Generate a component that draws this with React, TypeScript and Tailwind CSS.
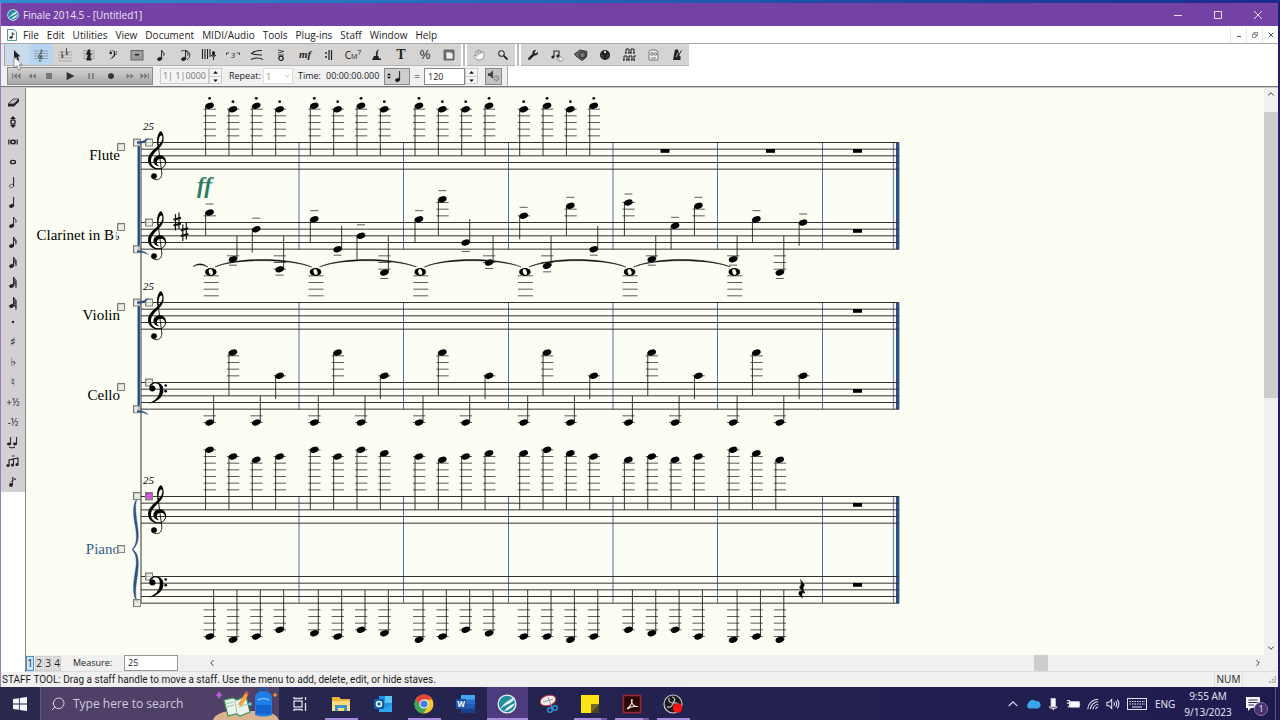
import React from 'react';
import { ChevronDown, ChevronLeft, ChevronRight, ChevronUp, Hand, Search, X } from 'lucide-react';
import { FaWrench } from 'react-icons/fa';

type Tool = { label: string; icon: React.ReactNode; active?: string };

const UI_FONT = "font-['Open_Sans','Noto_Sans',sans-serif]";

/* ---------- Music glyphs ---------- */

const TREBLE =
  'M43 3C50 9 53 24 49 36C45 50 33 58 24 68C15 78 12 86 13 95C14 107 25 115 36 115C48 115 55 107 55 98C55 90 49 86 43 86C35 86 30 91 30 97C30 102 33 106 38 109C28 108 20 102 20 93C20 83 29 76 40 76C51 76 58 85 58 96C58 109 48 118 34 118C18 118 4 107 4 90C4 76 14 65 26 55L33 49C29 30 31 10 43 3ZM46 17C42 14 34 20 36 45C42 38 50 28 46 17Z';
const BASS =
  'M8 16C8 4 18 -1 28 -1C44 0 52 12 50 28C47 46 28 61 6 63C24 55 37 44 39 26C41 10 36 2 27 2C20 2 14 6 12 12Z';

const TrebleShape = () => (
  <g>
    <path d={TREBLE} fillRule="evenodd" />
    <path d="M34 42L45 126C47 143 38 149 30 149C22 149 16 145 14 140" fill="none" stroke="currentColor" strokeWidth="2.5" />
    <circle cx="22" cy="138" r="8.5" />
  </g>
);

const BassShape = () => (
  <g>
    <path d={BASS} />
    <circle cx="17" cy="18" r="9" />
    <circle cx="57" cy="9" r="4" />
    <circle cx="57" cy="26" r="4" />
  </g>
);

const Icon = ({ children }: { children: React.ReactNode }) => (
  <svg viewBox="0 0 16 16" className="h-4 w-4" fill="currentColor" aria-hidden="true">
    {children}
  </svg>
);

const Lines = ({ x1 = 1, x2 = 15 }) => (
  <path d={`M${x1} 4H${x2}M${x1} 6.5H${x2}M${x1} 9H${x2}M${x1} 11.5H${x2}`} stroke="#8a8a8a" strokeWidth=".7" />
);

/* flags hang from the top of the stem */
const Note = ({ flags = 0, half = false, arc = false }) => (
  <Icon>
    <ellipse
      cx="6.6" cy="12" rx="2.3" ry="1.6" transform="rotate(-20 6.6 12)"
      fill={half ? 'none' : 'currentColor'} stroke="currentColor" strokeWidth=".6"
    />
    <path d="M8.6 12V3" stroke="currentColor" strokeWidth="1" />
    {Array.from({ length: flags }, (_, i) => (
      <path key={i} d={`M8.6 ${3 + i * 1.8}q.5 1.8 2 2.6q1 1.2.2 3`} fill="none" stroke="currentColor" strokeWidth="1" />
    ))}
    {arc && <path d="M4 4Q11 2 13 7Q13 11 10 13" fill="none" stroke="currentColor" strokeWidth=".8" />}
  </Icon>
);

/* ---------- Tool bars ---------- */

const mainTools: Tool[] = [
  { label: 'Selection Tool', active: 'bg-[#c9dbea]', icon: <Icon><path d="M5 3V12L7.2 10L8.6 13.5L10.2 12.8L8.8 9.4H11.5Z" /></Icon> },
  { label: 'Staff Tool', active: 'bg-[#b5d5f3]', icon: <Icon><Lines /><g transform="translate(5 2) scale(.085)"><TrebleShape /></g></Icon> },
  { label: 'Key Signature Tool', icon: <Icon><path d="M1 5H15M1 8H15M1 11H15M1 14H15" stroke="#999" strokeWidth=".7" /><path d="M5 4V11Q7.500 8 5 8M9.500 1V8Q12 5 9.500 5" fill="none" stroke="#444" strokeWidth=".9" /></Icon> },
  { label: 'Time Signature Tool', icon: <Icon><Lines x1={2} x2={14} /><path d="M7 2.5H9.3V6.5H10.5V8H5.5V6.5ZM7 8H9.5V11.5H10.5V13.5H5.5V12Z" /></Icon> },
  { label: 'Clef Tool', icon: <Icon><g transform="translate(3.4 3.4) scale(.14)"><BassShape /></g></Icon> },
  { label: 'Measure Tool', icon: <Icon><rect x="2" y="3.5" width="12" height="9.5" fill="#9d9d9d" stroke="#666" /><path d="M6 7H10V8.5H6Z" /></Icon> },
  { label: 'Simple Entry Tool', icon: <Note flags={1} /> },
  { label: 'Speedy Entry Tool', icon: <Note flags={1} arc /> },
  { label: 'HyperScribe Tool', icon: <Icon><path d="M1.5 2V12M4 2V12M6.5 2V12M9 2V10" stroke="#222" strokeWidth="1.1" /><rect x="11" y="4" width="3" height="5" rx="1.5" /><path d="M10 8Q12.5 12 15 8M12.5 10V13" fill="none" stroke="#222" /></Icon> },
  { label: 'Tuplet Tool', icon: <Icon><path d="M1.500 8V6H4M12 6H14.500V8" fill="none" stroke="#333" strokeWidth=".9" /><text x="8" y="11" fontSize="8" fontStyle="italic" textAnchor="middle">3</text></Icon> },
  { label: 'Smart Shape Tool', icon: <Icon><path d="M13 3.500Q5 3.500 2.500 6.500Q6 8 13 8M2 12.500Q8 9.500 14 12.500" fill="none" stroke="#222" strokeWidth="1.1" /></Icon> },
  { label: 'Articulation Tool', icon: <Icon><path d="M5 3L11 4.5L5 6M5 8H11" fill="none" stroke="#333" strokeWidth=".9" /><circle cx="8" cy="11.3" r="2.2" fill="none" stroke="#222" strokeWidth="1.2" /></Icon> },
  { label: 'Expression Tool', icon: <span className="font-['Liberation_Serif',serif] text-[11px] font-bold italic">mf</span> },
  { label: 'Repeat Tool', icon: <Icon><circle cx="5" cy="6" r="1" /><circle cx="5" cy="10" r="1" /><path d="M8 3V13M10.500 3V13" stroke="#222" strokeWidth="1.2" /></Icon> },
  { label: 'Chord Tool', icon: <span className="font-['Open_Sans',sans-serif] text-[10px]">C<small className="text-[7px]">M</small><sup className="text-[7px]">7</sup></span> },
  { label: 'Lyrics Tool', icon: <Icon><path d="M10 2Q6 4 7 9H5Q4 11 3 13H12V11.5H10L9.5 9H8.5Q8 5 10 2Z" /></Icon> },
  { label: 'Text Tool', icon: <span className="font-['Liberation_Serif',serif] text-sm font-bold">T</span> },
  { label: 'Resize Tool', icon: <span className="font-['Liberation_Sans',sans-serif] text-xs">%</span> },
  { label: 'Page Layout Tool', icon: <Icon><path d="M3 3H13V13H3Z" fill="#777" stroke="#555" strokeWidth=".8" /><path d="M5 5H10L12 7V12H5Z" fill="#eee" stroke="#555" strokeWidth=".6" /></Icon> },
];

const navTools: Tool[] = [
  { label: 'Hand Grabber Tool', icon: <Hand className="h-3 w-3 fill-white text-gray-500" strokeWidth={1.5} /> },
  { label: 'Zoom Tool', icon: <Icon><circle cx="6.5" cy="6.5" r="2.800" fill="#ddd" stroke="#333" strokeWidth="1.1" /><path d="M8.800 8.800L12.500 12.500" stroke="#222" strokeWidth="1.800" /></Icon> },
];

const advancedTools: Tool[] = [
  { label: 'Special Tools', icon: <FaWrench className="h-2.5 w-2.5" /> },
  { label: 'Note Mover Tool', icon: <Icon><path d="M5 10V4H10V9" fill="none" stroke="#333" strokeWidth="1.2" /><circle cx="3.8" cy="10" r="1.5" /><circle cx="8.8" cy="9" r="1.5" /><path d="M8 11H11V9L14.500 12L11 15V13H8Z" fill="#f2f2f2" stroke="#888" strokeWidth=".7" /></Icon> },
  { label: 'Graphics Tool', icon: <Icon><path d="M1.500 7L7 3L14 4.500L13.500 10L9 13.500L3 9Z" fill="#666" stroke="#333" /><circle cx="9.500" cy="8" r="3" fill="#777" stroke="#222" /></Icon> },
  { label: 'MIDI Tool', icon: <Icon><circle cx="8" cy="8" r="5" /><circle cx="8" cy="5" r="1.2" fill="#d6d4d2" /><path d="M4.4 8.6H6M10 8.6H11.6M5.5 11L6.6 10M10.5 11L9.4 10" stroke="#999" strokeWidth=".6" /></Icon> },
  { label: 'Ossia Tool', icon: <Icon><path d="M5 6V2H8V6M10 6V2H13V6M3 13V9H6V13M8 13V9H11V13M13 13V9H15" fill="none" stroke="#222" strokeWidth="1" /><path d="M4 6H5.500M7 6H8.500M9 6H10.500M12 6H13.500M2 13H3.500M5 13H6.500M7 13H8.500M10 13H11.500M12.500 13H14" stroke="#222" strokeWidth="1.6" /></Icon> },
  { label: 'Mirror Tool', icon: <Icon><path d="M4 13V5Q4 3 6 3H10Q13 3 13 6V13Z" fill="#eee" stroke="#777" /><circle cx="7" cy="7" r="1.3" fill="none" stroke="#777" /><circle cx="10.5" cy="7" r="1.3" fill="none" stroke="#777" /><path d="M6 11H11" stroke="#777" /></Icon> },
  { label: 'Tempo Tool', icon: <Icon><path d="M6 2.5H9L10.500 9H11.500V13H4Z" /><path d="M8 11L12.500 3.500" stroke="#222" /><path d="M7 10L9 6" stroke="#ddd" strokeWidth=".8" /></Icon> },
];

const entryTools: Tool[] = [
  { label: 'Eraser', icon: <Icon><path d="M3 10L8 5H14L9 10Z" fill="#bbb" stroke="#333" strokeWidth=".8" /><path d="M3 10H9V12.500H3ZM9 10L14 5V7.5L9 12.5Z" /></Icon> },
  { label: 'Repitch', icon: <Icon><circle cx="8" cy="8" r="2.2" fill="none" stroke="#222" strokeWidth="1.3" /><path d="M8 2L11 5H5ZM8 14L11 11H5Z" /></Icon> },
  { label: 'Double Whole Note', icon: <Icon><path d="M3.500 5.500V10.500M12.500 5.500V10.500M5 5.500V10.500M11 5.500V10.500" stroke="#222" strokeWidth=".8" /><ellipse cx="8" cy="8" rx="2.2" ry="1.700" fill="none" stroke="#222" strokeWidth="1.5" /></Icon> },
  { label: 'Whole Note', icon: <Icon><ellipse cx="8" cy="8" rx="2.5" ry="1.600" fill="none" stroke="#222" strokeWidth="1.4" /></Icon> },
  { label: 'Half Note', icon: <Note half /> },
  { label: 'Quarter Note', icon: <Note /> },
  { label: 'Eighth Note', icon: <Note flags={1} /> },
  { label: '16th Note', icon: <Note flags={2} /> },
  { label: '32nd Note', icon: <Note flags={3} /> },
  { label: '64th Note', icon: <Note flags={4} /> },
  { label: '128th Note', icon: <Note flags={5} /> },
  { label: 'Augmentation Dot', icon: <Icon><circle cx="8" cy="8" r="1.2" /></Icon> },
  { label: 'Sharp', icon: <span className="font-['DejaVu_Sans',sans-serif] text-xs">♯</span> },
  { label: 'Flat', icon: <span className="font-['DejaVu_Sans',sans-serif] text-xs">♭</span> },
  { label: 'Natural', icon: <span className="font-['DejaVu_Sans',sans-serif] text-xs">♮</span> },
  { label: 'Half Step Up', icon: <span className="text-[10px]">+½</span> },
  { label: 'Half Step Down', icon: <span className="text-[10px]">-½</span> },
  { label: 'Tie', icon: <Icon><ellipse cx="4" cy="10" rx="2" ry="1.4" /><ellipse cx="10" cy="10" rx="2" ry="1.4" /><path d="M5.6 10V3M11.6 10V3M4 13Q7 15 10 13" fill="none" stroke="#222" /></Icon> },
  { label: 'Tuplet', icon: <Icon><path d="M4 11V6L13 4V10M8.5 10V5" fill="none" stroke="#222" strokeWidth="1.1" /><circle cx="3" cy="11.5" r="1.6" /><circle cx="7.5" cy="11" r="1.6" /><circle cx="12" cy="10.5" r="1.6" /><path d="M7 2H9.500" stroke="#222" /></Icon> },
  { label: 'Grace Note', icon: <Icon><circle cx="6" cy="11" r="1.9" /><path d="M7.5 11V3L10.5 6M5.5 8L11 4.5" fill="none" stroke="#222" strokeWidth=".8" /></Icon> },
];

const transport: { label: string; d: string; width: string; on?: boolean }[] = [
  { label: 'Rewind to Beginning', width: 'w-4', d: 'M3 4V12H4.2V4ZM9 4V12L4.6 8ZM14 4V12L9.4 8Z' },
  { label: 'Rewind', width: 'w-4', d: 'M8 4.5V11.5L3.5 8ZM13 4.5V11.5L8.5 8Z' },
  { label: 'Stop', width: 'w-[18px]', d: 'M4 4H12V12H4Z' },
  { label: 'Play', width: 'w-6', d: 'M3.500 2.500L14 8L3.500 13.500Z', on: true },
  { label: 'Pause', width: 'w-[18px]', d: 'M4.5 4H6.5V12H4.5ZM9.5 4H11.5V12H9.5Z' },
  { label: 'Record', width: 'w-[22px]', d: 'M8 4A4 4 0 1 1 7.99 4Z', on: true },
  { label: 'Fast Forward', width: 'w-4', d: 'M3.5 4.5V11.5L8 8ZM8.5 4.5V11.5L13 8Z' },
  { label: 'Forward to End', width: 'w-3.5', d: 'M2 4V12L6.6 8ZM7 4V12L11.4 8ZM11.8 4V12H13V4Z' },
];

const menus = ['File', 'Edit', 'Utilities', 'View', 'Document', 'MIDI/Audio', 'Tools', 'Plug-ins', 'Staff', 'Window', 'Help'];

const FinaleLogo = ({ className }: { className: string }) => (
  <svg viewBox="0 0 20 20" className={className} aria-hidden="true">
    <circle cx="10" cy="10" r="9.5" fill="#e9f4f6" />
    <circle cx="10" cy="10" r="8.2" fill="#238da0" />
    <path d="M3 16Q6 8 18 3.5Q15 9 10 10.5Q6 12 3 16ZM7 17.5Q9 13 18 9Q16 14.5 7 17.5Z" fill="#eaf6f8" />
  </svg>
);

const ToolGroup = ({ tools }: { tools: Tool[] }) => (
  <div className="flex border-b border-[#b4b4b4] bg-[#d6d4d2]">
    {tools.map((t) => (
      <button key={t.label} aria-label={t.label} className={`flex h-[21px] w-6 items-center justify-center leading-none text-[#222] ${t.active ?? ''}`}>
        {t.icon}
      </button>
    ))}
  </div>
);

const Spinner = ({ label }: { label: string }) => (
  <div className="flex w-[13px] flex-col border border-[#ccc] bg-[#f6f6f6]">
    <button aria-label={`${label} up`} className="flex h-[7px] items-center justify-center">
      <svg viewBox="0 0 6 4" className="h-[3px] w-[5px]"><path d="M0 3.5L3 0L6 3.5Z" /></svg>
    </button>
    <button aria-label={`${label} down`} className="flex h-[7px] items-center justify-center border-t border-[#ccc]">
      <svg viewBox="0 0 6 4" className="h-[3px] w-[5px]"><path d="M0 .5L3 4L6 .5Z" /></svg>
    </button>
  </div>
);

/* ---------- Score ---------- */

const STEP = 10 / 3;
const FIRST_NOTE = 209.6;
const MEASURE = 104.7;
const BEAT = 23.35;
const STAFF_LEFT = 141;
const STAFF_RIGHT = 899;

// positions are counted in staff steps down from the top line
const fluteNotes = [[-11, -10, -11, -10], [-11, -10, -11, -10], [-11, -10, -10, -11], [-10, -11, -10, -11]];
const clarinetNotes = [[-3, 11, 2, 14], [-1, 8, 4, 15], [-1, -7, 6, 12], [-2, 13, -5, 8], [-6, 11, 1, -5], [11, -1, 15, 0]];
const celloNotes = Array.from({ length: 6 }, () => [12, -9, 12, -2]);
const pianoHigh = [[-14, -12, -11, -12], [-14, -12, -14, -13], [-12, -11, -12, -13], [-13, -14, -13, -12], [-11, -12, -11, -12], [-14, -13, -11]];
const pianoLow = [[18, 19, 18, 16], [17, 18, 16, 17], [19, 18, 16, 17], [18, 18, 19, 18], [16, 17, 16, 18], [19, 18, 19]];
const barlines = [299, 403.5, 508.5, 613, 717.5, 822.5];

const ledgerSteps = (pos: number) => {
  const out: number[] = [];
  for (let s = -2; s >= pos; s -= 2) out.push(s);
  for (let s = 10; s <= pos; s += 2) out.push(s);
  return out;
};

const ScoreNote = ({ x, top, pos, mark }: { x: number; top: number; pos: number; mark?: 'dot' | 'tenuto' }) => {
  const y = top + pos * STEP;
  const up = pos > 4;
  const stemEnd = top + (up ? Math.min(pos - 7, 4) : Math.max(pos + 7, 4)) * STEP;
  const stemX = up ? x + 4 : x - 4;
  const markY = up ? y + (pos === 6 ? 9 : 6) : y - (pos === 2 || pos === 4 ? 11 : 8.5);
  return (
    <g>
      {ledgerSteps(pos).map((s) => (
        <path key={s} d={`M${x - 6} ${top + s * STEP}H${x + 6.3}`} stroke="#333" strokeWidth=".8" />
      ))}
      <path d={`M${stemX} ${y}V${stemEnd}`} stroke="#222" strokeWidth=".9" />
      <ellipse cx={x} cy={y} rx="4.4" ry="2.9" transform={`rotate(-20 ${x} ${y})`} />
      {mark === 'dot' && <circle cx={x} cy={y - 7.5} r="1.4" />}
      {mark === 'tenuto' && <path d={`M${x - 4} ${markY}H${x + 4}`} stroke="#333" strokeWidth=".8" />}
    </g>
  );
};

const Part = ({ top, notes, mark }: { top: number; notes: number[][]; mark?: 'dot' | 'tenuto' }) => (
  <g>
    {notes.map((bar, m) =>
      bar.map((pos, b) => <ScoreNote key={`${m}-${b}`} x={FIRST_NOTE + m * MEASURE + b * BEAT} top={top} pos={pos} mark={mark} />)
    )}
  </g>
);

const Staff = ({ top, clef }: { top: number; clef: 'treble' | 'bass' }) => (
  <g>
    {[0, 2, 4, 6, 8].map((s) => (
      <path key={s} d={`M${STAFF_LEFT} ${top + s * STEP}H${STAFF_RIGHT}`} stroke="#333" strokeWidth="1" />
    ))}
    <Handle x={145} y={top - 4} />
    {clef === 'treble' ? (
      <g transform={`translate(146.7 ${top - 12.5}) scale(.3333)`}><TrebleShape /></g>
    ) : (
      <g transform={`translate(146.7 ${top}) scale(.3333)`}><BassShape /></g>
    )}
    <rect x="853" y={top + 2 * STEP - 0.2} width="9" height="3.8" />
  </g>
);

const Handle = ({ x, y, fill = '#e9e9df' }: { x: number; y: number; fill?: string }) => (
  <g>
    <rect x={x + 0.5} y={y + 0.5} width="7" height="7" fill={fill} fillOpacity=".75" stroke="#85857d" />
    <path d={`M${x + 1} ${y + 7}V${y + 1}H${x + 7}`} fill="none" stroke="#555" strokeOpacity=".4" />
  </g>
);

const System = ({ top, bottom }: { top: number; bottom: number }) => (
  <g>
    {barlines.map((x) => (
      <path key={x} d={`M${x} ${top}V${bottom}`} stroke="#4f6f9a" strokeWidth="1" />
    ))}
    <path d={`M893.5 ${top}V${bottom}`} stroke="#7890ae" strokeWidth="1.3" />
    <rect x="896" y={top} width="3.4" height={bottom - top} fill="#2a5084" />
  </g>
);

const Bracket = ({ top, bottom }: { top: number; bottom: number }) => (
  <g>
    <rect x="137" y={top - 2} width="3.500" height={bottom - top + 3} fill="#8ea6c4" />
    <rect x="138" y={top - 2} width="2" height={bottom - top + 3} fill="#2b4f80" />
    <Handle x={133} y={top - 4} />
    <Handle x={133} y={bottom - 4} />
    <path d={`M137 ${top - 1}Q144 ${top - 1} 149 ${top - 5}Q145 ${top + 2} 137 ${top + 1}Z`} fill="#2b5488" />
    <path d={`M137 ${bottom + 1}Q145 ${bottom + 1} 149 ${bottom + 6}Q144 ${bottom + 3} 137 ${bottom + 3}Z`} fill="#2b5488" />
  </g>
);

const Score = () => (
  <svg viewBox="26 88 880 560" width="880" height="560" className="block shrink-0 font-['Liberation_Serif',serif] text-black" fill="currentColor" role="img" aria-label="Score">
    <System top={142.5} bottom={249.2} />
    <System top={302.5} bottom={409.2} />
    <System top={496.5} bottom={603.2} />
    <path d="M141 142V603" stroke="#333" strokeWidth="1" />

    <Staff top={142.5} clef="treble" />
    <Staff top={222.5} clef="treble" />
    <Staff top={302.5} clef="treble" />
    <Staff top={382.5} clef="bass" />
    <Staff top={496.5} clef="treble" />
    <Staff top={576.5} clef="bass" />
    <Bracket top={142.5} bottom={249.2} />
    <Bracket top={302.5} bottom={409.2} />

    <path
      d="M138 497C132 503 133 515 135.500 527C137 538 137 544 132 549.500C137 555 137 562 135 573C133 586 132 596 138 603C134 596 136 586 137.500 575C139 562 139 554 133 549.500C139 544 139 536 137.500 526C136 514 134 504 138 497Z"
      fill="#2c5486" stroke="#2c5486" strokeWidth=".4"
    />
    <Handle x={133} y={492} />
    <Handle x={133} y={599} />
    <Handle x={145} y={492} fill="#d12bd1" />

    <g fontSize="15" textAnchor="end">
      <text x="120" y="160">Flute</text>
      <text x="114" y="240">Clarinet in B</text>
      <text x="120" y="320">Violin</text>
      <text x="120" y="400">Cello</text>
      <text x="120" y="554" fill="#35608f">Piano</text>
    </g>
    <text x="115" y="240" fontSize="11" className="font-['DejaVu_Sans',sans-serif]">♭</text>
    {[143, 223, 303, 383, 545].map((y) => <Handle key={y} x={117} y={y} />)}

    <g fontSize="11" fontStyle="italic">
      <text x="143" y="130">25</text>
      <text x="143" y="290">25</text>
      <text x="143" y="484">25</text>
    </g>
    <text x="197" y="193" fontSize="23" fontStyle="italic" fontWeight="bold" fill="#2f7b66">ff</text>

    {/* key signature of the clarinet */}
    {[[177, 221.5], [184.3, 232]].map(([x, y]) => (
      <g key={x} stroke="#111">
        <path d={`M${x - 1.5} ${y - 7.5}V${y + 9}M${x + 2} ${y - 9}V${y + 7.5}`} strokeWidth="1.2" />
        <path d={`M${x - 3.5} ${y - 1.7}L${x + 4} ${y - 3.7}M${x - 3.5} ${y + 4}L${x + 4} ${y + 2}`} strokeWidth="2.2" />
      </g>
    ))}

    <Part top={142.5} notes={fluteNotes} mark="dot" />
    <Part top={222.5} notes={clarinetNotes} mark="tenuto" />
    <Part top={382.5} notes={celloNotes} />
    <Part top={496.5} notes={pianoHigh} />
    <Part top={576.5} notes={pianoLow} />

    {/* tied whole notes of the violin */}
    {[0, 1, 2, 3, 4, 5].map((m) => {
      const x = 210.8 + m * MEASURE;
      return (
        <g key={m}>
          {[275.8, 282.5, 289.2, 295.8].map((y) => (
            <path key={y} d={`M${x - 7} ${y}H${x + 8}`} stroke="#333" strokeWidth=".8" />
          ))}
          <ellipse cx={x} cy="272" rx="5.8" ry="3.9" />
          <ellipse cx={x} cy="272" rx="1.9" ry="3" fill="#fcfdf3" transform={`rotate(-20 ${x} 272)`} />
          {m < 5 && <path d={`M${x + 4} 267C${x + 25} 257 ${x + 78} 257 ${x + 101} 267C${x + 78} 258.500 ${x + 25} 258.500 ${x + 4} 267Z`} stroke="#222" strokeWidth=".5" />}
        </g>
      );
    })}
    <path d="M193 266.500Q200 261 208 267Q200 263 193 266.500Z" stroke="#111" strokeWidth=".5" />

    <rect x="660.500" y="149" width="9" height="3.800" />
    <rect x="766" y="149" width="9" height="3.800" />
    <path d="M800.500 579.500L804.500 585Q801.500 588 805 593Q800.500 592 802.500 598Q797 594 799.500 591.500Q801 590.500 802.500 591.500L799.500 587.500Q802.500 584 800.500 579.500Z" stroke="#111" strokeWidth=".5" />
  </svg>
);

/* ---------- Taskbar ---------- */

const apps: { name: string; state?: string; icon: React.ReactNode }[] = [
  {
    name: 'Task View',
    icon: <g fill="none" stroke="#dcdce8" strokeWidth="1.3"><path d="M4 5V3M12 5V3M4 15V17M12 15V17M4 4.500H12M4 15.500H12" /><rect x="4" y="7" width="8" height="6" /><path d="M15.500 3V6M15.500 9V17" /></g>,
  },
  {
    name: 'File Explorer', state: 'open',
    icon: <g><path d="M1 3H8L10 5H19V17H1Z" fill="#e9b43c" /><path d="M1 7H19V17H1Z" fill="#fbdc78" /><path d="M4 17V11H16V17H13V14H7V17Z" fill="#3f94d4" /></g>,
  },
  {
    name: 'Outlook',
    icon: <g><rect x="6" y="2" width="13" height="15" fill="#1f8fe0" /><path d="M12 2H19V9H12Z" fill="#5cc5f5" /><path d="M6 10L12.500 14L19 10V18H6Z" fill="#2ba6ea" /><rect x="1" y="5" width="10" height="10" rx="1" fill="#0f5fb0" /><circle cx="6" cy="10" r="2.500" fill="none" stroke="#fff" strokeWidth="1.400" /></g>,
  },
  {
    name: 'Chrome', state: 'open',
    icon: <g><circle cx="10" cy="10" r="9.500" fill="#f6c72f" /><path d="M1.800 5.200A9.500 9.500 0 0 1 18.300 5.500L10 5.500L6 12Z" fill="#e2453a" /><path d="M1.800 5.200A9.500 9.500 0 0 0 9.500 19.500L14 12L6 12Z" fill="#3aa757" /><circle cx="10" cy="10" r="4.600" fill="#fff" /><circle cx="10" cy="10" r="3.600" fill="#3f7fe8" /></g>,
  },
  {
    name: 'Word',
    icon: <g><rect x="5" y="1" width="14" height="18" fill="#2a6fd0" /><path d="M5 1H19V5.500H5Z" fill="#43a6ee" /><path d="M5 10H19V14.500H5Z" fill="#1f5ab8" /><path d="M5 14.500H19V19H5Z" fill="#173f8c" /><rect x="0" y="5" width="10" height="10" rx="1" fill="#1c52a8" /><text x="5" y="13" fontSize="8" fontWeight="bold" textAnchor="middle" fill="#fff">W</text></g>,
  },
  { name: 'Finale', state: 'active', icon: <FinaleLogo className="h-5 w-5" /> },
  {
    name: 'Snip & Sketch',
    icon: <g><ellipse cx="9" cy="6.500" rx="8" ry="5" fill="#f4eff2" stroke="#c8384a" transform="rotate(-15 9 6.500)" /><path d="M4 8L14 5M9 3L13 14" stroke="#9a8f9a" /><circle cx="11" cy="16" r="2.300" fill="none" stroke="#2f8fd6" strokeWidth="1.500" /><circle cx="16" cy="14" r="2.300" fill="none" stroke="#2f8fd6" strokeWidth="1.500" /></g>,
  },
  { name: 'Sticky Notes', state: 'multi', icon: <g><path d="M1 1H19V10L11 19H1Z" fill="#fbe416" /><path d="M11 10H19V19H11Z" fill="#4b4321" /><path d="M11 19L19 10H11Z" fill="#776a26" /></g> },
  { name: 'Acrobat', state: 'multi', icon: <g><rect x="1.500" y="1.500" width="17" height="17" fill="#2c0708" stroke="#a5242b" strokeWidth="1.500" /><path d="M5 15Q11 10 10 5.500Q9 5.500 10 9Q12 13 16 12.500Q10 11.500 5 15Z" fill="none" stroke="#f5e9e9" strokeWidth="1.100" /></g> },
  { name: 'OBS Studio', state: 'open', icon: <g><circle cx="10" cy="10" r="9" fill="#1c1c20" stroke="#c9c9cf" strokeWidth="1.200" /><path d="M6 4Q5 9 10 9Q14 4 9 3M10 9Q9 14 4 13M10 9Q15 8 16 12" fill="none" stroke="#c9c9cf" strokeWidth="1.200" /><circle cx="14.500" cy="14" r="4.800" fill="#f01414" /></g> },
];

const TrayIcon = ({ children }: { children: React.ReactNode }) => (
  <svg viewBox="0 0 16 16" className="h-3.5 w-5 shrink-0" fill="none" stroke="#e6e6f2" strokeWidth="1.200" aria-hidden="true">{children}</svg>
);

const Taskbar = () => (
  <footer className="flex h-[33px] shrink-0 items-stretch bg-linear-to-r from-[#29294e] to-[#1f1b50] text-[#ececf6]">
    <button aria-label="Start" className="flex w-10 items-center justify-center">
      <svg viewBox="0 0 14 14" className="h-3.5 w-3.5" fill="#f4f4fa"><path d="M0 2L6 1.200V6.600H0ZM6.800 1.100L14 0V6.600H6.800ZM0 7.400H6V12.800L0 12ZM6.800 7.400H14V14L6.800 12.900Z" /></svg>
    </button>
    <button className="flex w-[239px] items-center overflow-hidden border-l border-[#66587c] bg-[#4e4066] text-left">
      <Search className="ml-[9px] h-4 w-4 -scale-x-100 text-[#ddd6ea]" strokeWidth={1.500} />
      <span className="ml-[7px] grow text-xs whitespace-nowrap text-[#d3cbdf]">Type here to search</span>
      <svg viewBox="0 0 66 33" className="h-[33px] w-[66px] shrink-0" aria-hidden="true">
        <path d="M0 33Q2 26 16 24H52Q64 27 66 33Z" fill="#d9b48e" />
        <path d="M11 13L20 11L24 13L33 9L37 25L27 29L23 27L15 29Z" fill="#e9f5ea" stroke="#3f8f5c" strokeWidth="1.200" />
        <path d="M22 13L24 27M13 17L21 15M14 20L21 18M25 16L33 13M26 20L34 17" stroke="#8bbd9a" strokeWidth=".8" />
        <path d="M25 18L32 6L35 8L29 19Z" fill="#f4a238" /><path d="M32 6L35 8L36 6L33 4Z" fill="#e4584d" />
        <path d="M42 12Q42 4 50 4Q59 4 59 12V28Q50 31 42 28Z" fill="#1f7de8" />
        <path d="M46 5Q46 1 50 1Q55 1 55 5" fill="none" stroke="#155dc0" strokeWidth="1.500" />
        <path d="M43 18H58V27H43Z" fill="#1563d0" /><path d="M45 13Q50 10 56 13" fill="none" stroke="#7cc1ff" strokeWidth="1.500" />
        <path d="M6 4L7.500 7L10 8L7.500 9L6 12L4.500 9L2 8L4.500 7Z" fill="#c05fe8" />
        <circle cx="62" cy="8" r="1.800" fill="#f2952f" /><circle cx="37" cy="17" r="1.800" fill="#5cc6f0" />
      </svg>
    </button>
    <div className="grid w-[415px] shrink-0 grid-cols-10">
      {apps.map((a) => (
        <button key={a.name} aria-label={a.name} className={`relative flex items-center justify-center ${a.state === 'active' ? 'bg-[#4d3b7e]' : ''}`}>
          {a.name === 'Finale' ? a.icon : <svg viewBox="0 0 20 20" className="h-5 w-5" aria-hidden="true">{a.icon}</svg>}
          {a.state && <span className={`absolute bottom-0 h-0.5 bg-[#a68bdc] ${a.state === 'active' ? 'inset-x-0' : 'inset-x-1'}`} />}
          {a.state === 'multi' && <span className="absolute right-1 bottom-0 h-0.5 w-1.5 bg-[#6f5aa8]" />}
        </button>
      ))}
    </div>
    <div className="ml-auto flex items-center text-[10px]">
      <TrayIcon><path d="M3 10.500L8 5.500L13 10.500" /></TrayIcon>
      <TrayIcon><path d="M3.500 12.500A3 3 0 0 1 3 7.500A4.500 4.500 0 0 1 11 5.500A3.600 3.600 0 0 1 13.500 12.500Z" fill="#3aa6ea" stroke="#3aa6ea" /></TrayIcon>
      <TrayIcon><rect x="6" y="2" width="4.500" height="9" fill="#fff" /><path d="M4 10.500Q4 13 8.200 13Q12.500 13 12.500 10.500M8.200 13V15" /></TrayIcon>
      <TrayIcon><rect x="5" y="5.500" width="10" height="6" fill="#fff" /><path d="M1 4H4V7H1M4 6V11H2M15.500 7V10" /></TrayIcon>
      <TrayIcon><path d="M2 14A12 12 0 0 1 14 2.500M5 14A9 9 0 0 1 14 5.500M8 14A6 6 0 0 1 14 8.500M11 14A3 3 0 0 1 14 11.500" /></TrayIcon>
      <TrayIcon><path d="M1 6H3.500L6.500 3V13L3.500 10H1ZM9 6Q10.500 8 9 10M11 4.500Q13.500 8 11 11.500M13 3Q16.500 8 13 13" /></TrayIcon>
      <svg viewBox="0 0 20 12" className="ml-1 h-3 w-5" fill="none" stroke="#e6e6f2" aria-hidden="true">
        <rect x=".5" y=".5" width="19" height="11" /><path d="M2.500 3.500H18M2.500 6H18" strokeDasharray="1.500 1" /><path d="M5 9H15" />
      </svg>
      <span className="ml-2 w-6">ENG</span>
      <time className="ml-1 w-[50px] text-center leading-4 whitespace-nowrap">9:55 AM<br />9/13/2023</time>
      <button aria-label="Notifications" className="relative ml-[5px] flex h-full w-[30px] items-center justify-center">
        <svg viewBox="0 0 16 16" className="h-4 w-4" aria-hidden="true"><path d="M1 1H15V12H6L3 15V12H1Z" fill="#f5f5fb" /><path d="M3.500 4H12.500M3.500 6.500H12.500M3.500 9H9" stroke="#2a2658" /></svg>
        <span className="absolute right-0 bottom-1 flex h-3.5 w-3.5 items-center justify-center rounded-full border border-[#8a70a8] bg-[#46306e] text-[9px]">1</span>
      </button>
      <span className="ml-[7px] h-full w-[5px] border-l border-[#5d5a85]" />
    </div>
  </footer>
);

export default function App() {
  return (
    <div className={`flex h-screen w-full flex-col overflow-hidden bg-[#201d6a] text-[10px] leading-4 text-[#1c1c1c] ${UI_FONT}`}>
      <div className="h-[3px] shrink-0 bg-linear-to-r from-[#2f8fd0] to-[#1b2b8c]" />
      <div className="mr-0.5 flex min-h-0 grow flex-col border-l border-[#9a7cc0] bg-white">
        {/* Title bar */}
        <header className="flex h-[23px] shrink-0 items-center bg-[#7442a4] text-[#efe4fa]">
          <FinaleLogo className="ml-1.5 h-3 w-3" />
          <h1 className="ml-1 grow whitespace-nowrap">Finale 2014.5 - [Untitled1]</h1>
          {[
            { label: 'Minimize', d: 'M1 5.500H9' },
            { label: 'Maximize', d: 'M1.500 1.500H8.500V8.500H1.500Z' },
            { label: 'Close', d: 'M1 1L9 9M9 1L1 9' },
          ].map((b) => (
            <button key={b.label} aria-label={b.label} className="flex h-full w-10 items-center justify-center">
              <svg viewBox="0 0 10 10" className="h-2.5 w-2.5" fill="none" stroke="#eadcf8"><path d={b.d} /></svg>
            </button>
          ))}
        </header>

        {/* Menu bar */}
        <nav className="flex h-[18px] shrink-0 items-center border-b border-[#a9a9a9] pl-1.5">
          <svg viewBox="0 0 10 12" className="mr-1.5 h-3 w-2.5" aria-hidden="true">
            <path d="M.5 .5H7L9.500 3V11.500H.5Z" fill="#f3fafa" stroke="#5c8f96" />
            <ellipse cx="4" cy="8.500" rx="1.500" ry="1.100" /><path d="M5.300 8.500V3.500L7.500 6" fill="none" stroke="#111" strokeWidth=".8" />
          </svg>
          <div className="flex gap-2">
            {menus.map((m) => <button key={m} className="leading-4">{m}</button>)}
          </div>
          <div className="ml-auto flex">
            <button aria-label="Minimize document" className="flex h-4 w-4 items-center justify-center border-l border-gray-200"><span className="mt-1 h-px w-1 bg-gray-600" /></button>
            <button aria-label="Restore document" className="flex h-4 w-4 items-center justify-center border-l border-gray-200">
              <svg viewBox="0 0 8 8" className="h-1.5 w-1.5" fill="none" stroke="#555"><path d="M2.500 2.500V.5H7.500V4.500H5.500M.5 3H5.500V7H.5Z" /></svg>
            </button>
            <button aria-label="Close document" className="flex h-4 w-4 items-center justify-center border-l border-gray-200"><X className="h-2 w-2 text-gray-600" strokeWidth={3} /></button>
          </div>
        </nav>

        {/* Tool palettes */}
        <div className="relative flex h-[22px] shrink-0">
          <span className="w-1 border-r border-[#aaa] bg-[#e8e8e8]" />
          <ToolGroup tools={mainTools} />
          <span className="mx-0.5 w-0.5 border-x border-[#bbb]" />
          <ToolGroup tools={navTools} />
          <span className="mx-0.5 w-0.5 border-x border-[#bbb]" />
          <ToolGroup tools={advancedTools} />
          <svg viewBox="0 0 12 16" className="absolute top-3 left-3 z-10 h-4 w-3" aria-hidden="true">
            <path d="M1 1V12L3.800 9.500L5.500 14L7.800 13L6 8.800H9.500Z" fill="#fff" stroke="#777" strokeWidth=".8" />
          </svg>
        </div>

        {/* Playback controls */}
        <div className="flex h-[21px] shrink-0 border-b border-[#777]">
          <div className="flex items-center border-r border-[#aaa] bg-[#f0f0f0] pr-[5px] pl-1.5 text-[9px]">
            <div className="flex border border-[#8b8b8b] bg-linear-to-b from-[#d2d2d2] to-[#a9a9a9]">
              {transport.map((t) => (
                <button key={t.label} aria-label={t.label} className={`flex h-4 items-center justify-center ${t.width}`}>
                  <svg viewBox="0 0 16 16" className="h-3 w-3" fill={t.on ? '#333' : '#777'}><path d={t.d} /></svg>
                </button>
              ))}
            </div>
            <input aria-label="Counter" readOnly value="1| 1|0000" className="ml-[7px] h-4 w-[49px] border border-[#ccc] bg-[#f4f4f4] pr-0.5 text-right text-[#777]" />
            <Spinner label="Counter" />
            <label htmlFor="repeat" className="ml-[7px] w-[34px]">Repeat:</label>
            <div className="relative">
              <select id="repeat" className="h-4 w-[30px] appearance-none border border-[#ddd] bg-white pl-0.5 text-[#888]"><option>1</option></select>
              <ChevronDown className="pointer-events-none absolute top-1 right-0.5 h-2 w-2 text-gray-400" />
            </div>
            <span className="ml-[5px] w-7">Time:</span>
            <output className="w-[58px]">00:00:00.000</output>
            <button aria-label="Beat unit" className="flex h-[17px] w-[26px] items-center justify-center border border-[#888] bg-[#cfcfcf]">
              <svg viewBox="0 0 6 8" className="h-2 w-1"><path d="M0 3L3 0L6 3ZM0 5L3 8L6 5Z" /></svg>
              <Note />
            </button>
            <label htmlFor="tempo" className="w-[14px] text-center text-[10px]">=</label>
            <input id="tempo" defaultValue="120" className="h-[17px] w-[41px] border border-[#888] bg-white pl-[3px]" />
            <Spinner label="Tempo" />
            <button aria-label="Playback Settings" className="ml-[7px] flex h-[17px] w-[17px] items-center justify-center border border-[#888] bg-[#c4c4c4]">
              <Icon><path d="M2 5H4L7.500 2V11L4 8H2Z" fill="#444" /><circle cx="11" cy="10.500" r="2.300" fill="none" stroke="#888" strokeWidth="2" strokeDasharray="1.500 .7" /></Icon>
            </button>
          </div>
        </div>

        <main className="flex min-h-0 grow border-t border-[#c9c9c4]">
          {/* Simple entry palette */}
          <aside className="w-[25px] shrink-0 border-r border-[#888] bg-white">
            <div className="flex flex-col items-center bg-[#d3d0d3] pt-1">
              {entryTools.map((t) => (
                <button key={t.label} aria-label={t.label} className="flex h-5 w-full items-center justify-center leading-none text-[#222]">{t.icon}</button>
              ))}
            </div>
          </aside>

          <div className="flex min-w-0 grow flex-col">
            <div className="flex min-h-0 grow">
              <section className="min-w-0 grow overflow-hidden bg-[#fcfdf3]">
                <Score />
              </section>
              <div className="flex w-[14px] shrink-0 flex-col items-center bg-[#f0f0f0]">
                <button aria-label="Scroll up" className="flex h-3 items-center"><ChevronUp className="h-2.5 w-2.5" /></button>
                <div className="w-full grow pt-3">
                  <div className="h-[54%] w-full bg-[#cdcdcd]" />
                </div>
                <button aria-label="Scroll down" className="flex h-3.5 items-center"><ChevronDown className="h-2.5 w-2.5" /></button>
              </div>
            </div>

            <div className="flex h-[17px] shrink-0 items-center border-b border-[#dcdcdc] bg-[#f0f0f0]">
              <div className="flex gap-px">
                {[1, 2, 3, 4].map((n) => (
                  <button key={n} className={`flex h-[15px] w-2 items-center justify-center border ${n === 1 ? 'border-[#4c93c2] bg-[#cde6f7]' : 'border-[#ccc] bg-[#e0e0e0]'}`}>{n}</button>
                ))}
              </div>
              <label htmlFor="measure" className="ml-3 w-[51px] text-[9px]">Measure:</label>
              <input id="measure" defaultValue="25" className="h-4 w-[54px] border border-[#999] bg-white pl-[3px] text-[9px]" />
              <button aria-label="Scroll left" className="ml-7 flex w-3 items-center justify-center"><ChevronLeft className="h-2.5 w-2.5" /></button>
              <div className="flex h-full grow pr-[204px]">
                <div className="ml-auto h-full w-3.5 bg-[#cdcdcd]" />
              </div>
              <button aria-label="Scroll right" className="mr-3.5 flex w-3 items-center justify-center"><ChevronRight className="h-2.5 w-2.5" /></button>
            </div>
          </div>
        </main>

        {/* Status bar */}
        <div className="flex h-[15px] shrink-0 items-center bg-[#f0f0f0] pl-px">
          <p className="grow font-['Roboto',sans-serif] leading-[15px] whitespace-nowrap">STAFF TOOL: Drag a staff handle to move a staff. Use the menu to add, delete, edit, or hide staves.</p>
          <span className="w-[29px] border-x border-[#ddd] text-center leading-[15px]">NUM</span>
          <svg viewBox="0 0 9 9" className="mr-px ml-[26px] h-2 w-2" fill="#aaa" aria-hidden="true"><path d="M6 0H8V2H6ZM3 3H5V5H3ZM6 3H8V5H6ZM0 6H2V8H0ZM3 6H5V8H3ZM6 6H8V8H6Z" /></svg>
        </div>
      </div>
      <Taskbar />
    </div>
  );
}
